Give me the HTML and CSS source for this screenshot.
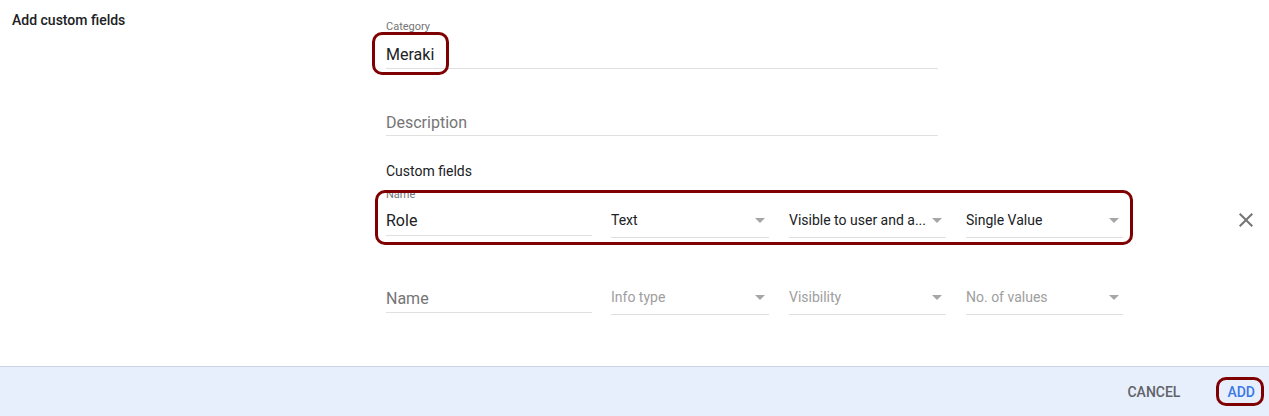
FILE: index.html
```html
<!DOCTYPE html>
<html lang="en">
<head>
  <meta charset="UTF-8">
  <title>Add custom fields</title>
  <link rel="stylesheet" href="styles.css">
</head>
<body>

<div class="page">
  <div class="content">
    <div class="side">Add custom fields</div>

    <div class="form">
      <div class="field wide">
        <div class="label">Category</div>
        <div class="value"><span class="mark mark-cat">Meraki</span></div>
      </div>

      <div class="field wide gap-top">
        <div class="label"></div>
        <div class="value placeholder">Description</div>
      </div>

      <div class="section">Custom fields</div>

      <div class="row-wrap">
        <div class="row mark mark-row">
          <div class="field name">
            <div class="label">Name</div>
            <div class="value">Role</div>
          </div>
          <div class="select">
            <span>Text</span><i class="arrow"></i>
          </div>
          <div class="select">
            <span>Visible to user and a...</span><i class="arrow"></i>
          </div>
          <div class="select">
            <span>Single Value</span><i class="arrow"></i>
          </div>
        </div>
        <button class="close" title="Remove">
          <svg width="24" height="24" viewBox="0 0 24 24"><path d="M19 6.41L17.59 5 12 10.59 6.41 5 5 6.41 10.59 12 5 17.59 6.41 19 12 13.41 17.59 19 19 17.59 13.41 12z"/></svg>
        </button>
      </div>

      <div class="row-wrap second">
        <div class="row">
          <div class="field name">
            <div class="label"></div>
            <div class="value placeholder">Name</div>
          </div>
          <div class="select empty">
            <span>Info type</span><i class="arrow"></i>
          </div>
          <div class="select empty">
            <span>Visibility</span><i class="arrow"></i>
          </div>
          <div class="select empty">
            <span>No. of values</span><i class="arrow"></i>
          </div>
        </div>
      </div>
    </div>
  </div>

  <div class="footer">
    <button class="btn">CANCEL</button>
    <button class="btn primary mark mark-add">ADD</button>
  </div>
</div>

</body>
</html>
```

FILE: styles.css
```css
body {
  margin: 0;
  font-family: Roboto, "Liberation Sans", Arial, sans-serif;
  color: #202124;
  background: #fff;
}
.page {
  height: 416px;
  display: flex;
  flex-direction: column;
}
.content {
  flex: 1;
  display: flex;
  padding: 0 11px 0 12px;
}
.side {
  width: 374px;
  font-size: 14px;
  font-weight: 500;
  line-height: 16px;
  padding-top: 12px;
}
.form {
  flex: 1;
  padding-top: 21px;
}

/* text inputs */
.field {
  border-bottom: 1px solid #e0e0e0;
}
.field.wide {
  width: 552px;
}
.gap-top {
  margin-top: 19px;
}
.label {
  height: 12px;
  font-size: 11px;
  line-height: 12px;
  color: #757575;
}
.value {
  font-size: 16px;
  line-height: 20px;
  padding: 12px 0 3px;
}
.gap-top .value {
  padding: 13px 0 2px;
}
.placeholder {
  color: #757575;
}
.section {
  font-size: 14px;
  line-height: 20px;
  margin-top: 25px;
}

/* custom field rows */
.row-wrap {
  display: flex;
  align-items: flex-start;
  margin-top: 8px;
}
.row-wrap.second {
  margin-top: 28px;
}
.row {
  display: flex;
  align-items: flex-start;
}
.field.name {
  width: 206px;
  margin-right: 19px;
}
.field.name .value {
  padding: 10px 0 4px;
}
.second .field.name .value {
  padding: 11px 0 3px;
}
.select {
  width: 157px;
  margin-right: 20px;
  border-bottom: 1px solid #e0e0e0;
  display: flex;
  align-items: center;
  justify-content: space-between;
  margin-top: 12px;
  padding: 9px 0 7px;
  font-size: 14px;
  line-height: 20px;
}
.field.name + .select {
  width: 158px;
}
.select:last-child {
  margin-right: 0;
}
.select.empty {
  color: #9e9e9e;
}
.arrow {
  width: 0;
  height: 0;
  border-left: 5px solid transparent;
  border-right: 5px solid transparent;
  border-top: 5px solid #a6a6a6;
  margin-right: 4px;
}
.close {
  margin-left: auto;
  margin-top: 19px;
  border: 0;
  background: none;
  padding: 0;
  width: 24px;
  height: 24px;
  fill: #757575;
}

/* bottom bar */
.footer {
  height: 49px;
  border-top: 1px solid #cbd5e6;
  background: #e8effc;
  display: flex;
  align-items: center;
  justify-content: flex-end;
  gap: 23px;
  padding-right: 2px;
}
.btn {
  border: 0;
  background: none;
  font-family: inherit;
  font-size: 14px;
  font-weight: 500;
  line-height: 20px;
  padding: 8px 12px;
  color: #5f6368;
}
.btn.primary {
  color: #3b78e7;
}

/* highlight rings */
.mark {
  position: relative;
}
.mark::after {
  content: "";
  position: absolute;
  border: 3px solid #7f0000;
  border-radius: 10px;
  pointer-events: none;
}
.mark-cat {
  display: inline-block;
}
.mark-cat::after {
  left: -14px;
  right: -15px;
  top: -13px;
  bottom: -10px;
}
.mark-row::after {
  left: -11px;
  right: -10px;
  top: 1px;
  bottom: -7px;
}
.mark-add::after {
  left: 1px;
  right: 3px;
  top: 3px;
  bottom: 4px;
}
```
